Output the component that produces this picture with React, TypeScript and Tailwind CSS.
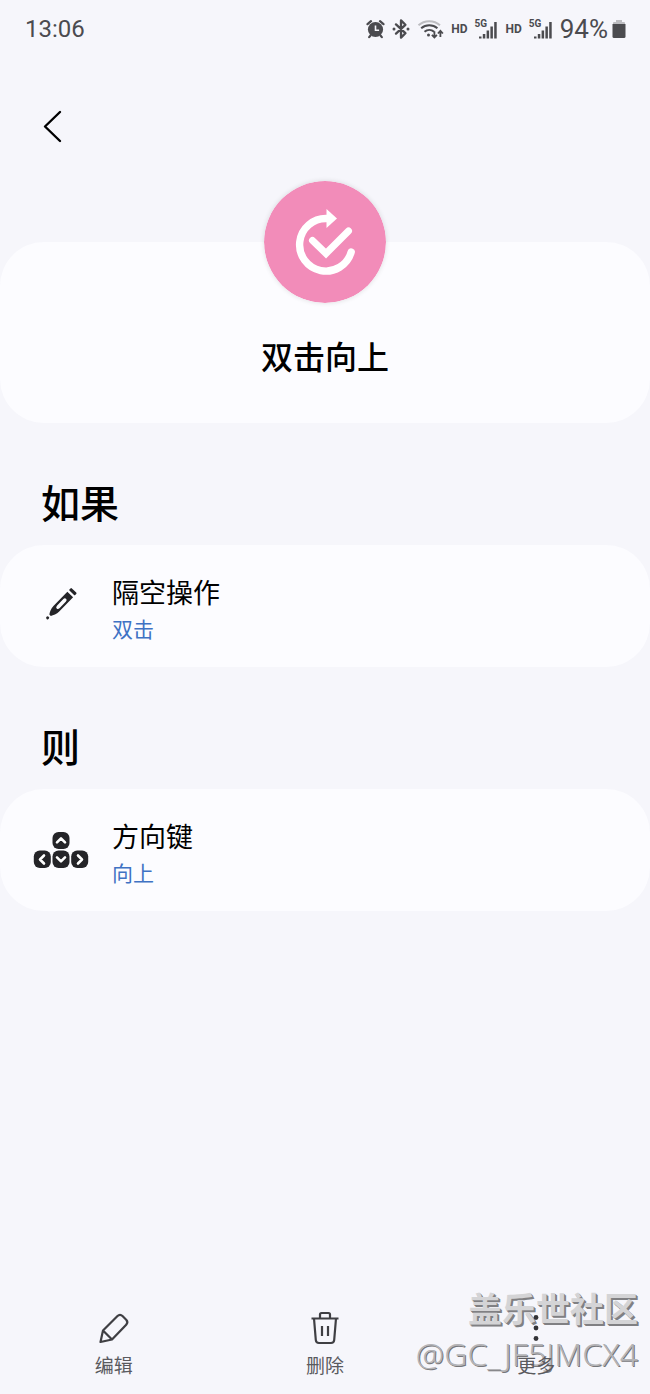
import type { ReactNode } from "react";

const INK = "#4b4b4f";

function AlarmIcon() {
  return (
    <svg width="19" height="20" viewBox="0 0 19 20" fill="none" aria-hidden="true">
      <circle cx="9.5" cy="10.5" r="7.6" fill={INK} />
      <path d="M1.5 5.2 5 2.2M17.5 5.2 14 2.2M4.5 16.5l-1.3 1.6M14.5 16.5l1.3 1.6" stroke={INK} strokeWidth="2.2" strokeLinecap="round" />
      <path d="M9.5 6.4v4.8h3.6" stroke="#f6f6fb" strokeWidth="1.6" />
    </svg>
  );
}

function BluetoothIcon() {
  return (
    <svg width="18" height="20" viewBox="0 0 18 20" fill="none" aria-hidden="true">
      <path d="M4 5.4 13.4 14.2 9 18.6V1.4L13.4 5.8 4 14.6" stroke={INK} strokeWidth="2.3" strokeLinejoin="round" strokeLinecap="round" />
      <circle cx="2" cy="10" r="1.5" fill={INK} />
      <circle cx="16" cy="10" r="1.5" fill={INK} />
    </svg>
  );
}

function WifiIcon() {
  return (
    <svg width="27" height="20" viewBox="0 0 27 20" fill="none" aria-hidden="true">
      <path d="M1.5 6.2c6-5.4 15.5-5.4 21.5 0" stroke="#bdbdc1" strokeWidth="2" />
      <path d="M4.2 9.3c4.6-4 11.6-4 16.2 0M7.5 12.7c2.8-2.4 6.8-2.4 9.6 0" stroke={INK} strokeWidth="2" />
      <circle cx="11.5" cy="16" r="1.5" fill={INK} />
      <path d="M17.4 12.2v6M14.9 15.8l2.5 2.7 2.5-2.7M23.4 18v-6M20.9 14.5l2.5-2.7 2.5 2.7" stroke={INK} strokeWidth="1.8" />
    </svg>
  );
}

function SignalIcon() {
  return (
    <span className="relative block h-5 w-6">
      <span className="absolute -top-px left-0 text-[10px] leading-[12px] font-bold">5G</span>
      <svg className="absolute inset-0" width="24" height="20" viewBox="0 0 24 20" fill={INK} aria-hidden="true">
        <path d="M5 17.5h2.5v2H5zM8.8 15h2.5v4.5H8.8zM12.6 11.5h2.5v8h-2.5zM16.4 7.5h2.5v12h-2.5zM20.2 3h2.5v16.5h-2.5z" />
      </svg>
    </span>
  );
}

function BatteryIcon() {
  return (
    <svg width="14" height="20" viewBox="0 0 14 20" aria-hidden="true">
      <path d="M4 1h6v2h2q1 0 1 1v2H1V4q0-1 1-1h2z" fill="#bdbdc1" />
      <path d="M.5 5h13v12.5q0 1.5-1.5 1.5H2Q.5 19 .5 17.5z" fill={INK} />
    </svg>
  );
}

function StatusBar() {
  return (
    <div className="flex h-[58px] items-center justify-between pr-6 pl-[25px] font-['Roboto','Liberation_Sans',sans-serif] text-[#4b4b4f]">
      <span className="text-[24px] leading-8">13:06</span>
      <div className="flex items-center gap-[7px]">
        <AlarmIcon />
        <BluetoothIcon />
        <WifiIcon />
        <span className="text-[12px] leading-5 font-bold">HD</span>
        <SignalIcon />
        <span className="text-[12px] leading-5 font-bold">HD</span>
        <SignalIcon />
        <div className="flex items-center gap-1">
          <span className="text-[26px] leading-8">94%</span>
          <BatteryIcon />
        </div>
      </div>
    </div>
  );
}

function RoutineBadge() {
  return (
    <svg className="-mt-[61px] rounded-full shadow-[0_0_5px_rgba(0,0,0,0.12)]" width="122" height="122" viewBox="0 0 122 122" fill="none" aria-hidden="true">
      <circle cx="61" cy="61" r="61" fill="#f28cb9" />
      <path d="M63 37.5A26.3 26.3 0 1 0 87.2 71" stroke="#fff" strokeWidth="7.4" strokeLinecap="round" />
      <path d="M62.5 28 73 37.5 62.5 47z" fill="#fff" />
      <path d="M48.5 59.5 62 72.5 84.5 50" stroke="#fff" strokeWidth="7" strokeLinecap="round" />
    </svg>
  );
}

function PenIcon() {
  return (
    <svg width="56" height="60" viewBox="0 0 56 60" fill="none" aria-hidden="true">
      <g transform="translate(27.5 30.5) rotate(44)" fill="#242428">
        <path d="M-3.2-16.2h6.4q.8 0 .8-.8v-1.5q0-1-1-1h-6q-1 0-1 1v1.5q0 .8.8.8z" />
        <path fillRule="evenodd" d="M-4-14h8V6c0 3.5-1.6 7-3 9h-2c-1.400-2-3-5.500-3-9zM-1.800-6V3q0 2.500 1.800 2.500t1.800-2.500V-6q0-2-1.800-2t-1.800 2z" />
        <circle cx="0" cy="18.5" r="1.5" />
      </g>
    </svg>
  );
}

function ArrowKeysIcon() {
  return (
    <svg width="56" height="60" viewBox="0 0 56 60" fill="none" aria-hidden="true">
      <g fill="#242428">
        <rect x="19.5" y="14" width="17" height="17" rx="6" />
        <rect x="0.8" y="32.5" width="17" height="17.5" rx="6" />
        <rect x="19.5" y="32.5" width="17" height="17.5" rx="6" />
        <rect x="38.2" y="32.5" width="17" height="17.5" rx="6" />
      </g>
      <path d="m24 24.3 4-4 4 4M11 37.5l-4 4 4 4M24 39.3l4 4 4-4M45 37.5l4 4-4 4" stroke="#fff" strokeWidth="2.6" strokeLinecap="round" strokeLinejoin="round" />
    </svg>
  );
}

function EditIcon() {
  return (
    <svg width="36" height="36" viewBox="0 0 36 36" fill="none" stroke="#3f3f43" strokeWidth="2.2" strokeLinejoin="round" aria-hidden="true">
      <path d="M4.5 32 7 20.5 21.5 6q2.5-2.500 5 0l3.700 3.700q2.300 2.500 0 5L16 29.500zM7 20.500 16 29.500" />
    </svg>
  );
}

function TrashIcon() {
  return (
    <svg width="36" height="36" viewBox="0 0 36 36" fill="none" stroke="#3f3f43" strokeWidth="2.2" strokeLinejoin="round" aria-hidden="true">
      <path d="M4.5 8.500h27M13 8.500v-4Q13 3 14.500 3h7Q23 3 23 4.500v4M7 8.500l1.800 21.500q.3 3 3.200 3h12q2.900 0 3.200-3L29 8.500M15 16V26M21 16V26" />
    </svg>
  );
}

function MoreIcon() {
  return (
    <svg width="36" height="36" viewBox="0 0 36 36" fill="#333337" aria-hidden="true">
      <circle cx="18" cy="7.5" r="2.4" />
      <circle cx="18" cy="18" r="2.4" />
      <circle cx="18" cy="28.5" r="2.4" />
    </svg>
  );
}

const sections = [
  { heading: "如果", title: "隔空操作", value: "双击", icon: <PenIcon /> },
  { heading: "则", title: "方向键", value: "向上", icon: <ArrowKeysIcon /> },
];

const actions: { label: string; icon: ReactNode }[] = [
  { label: "编辑", icon: <EditIcon /> },
  { label: "删除", icon: <TrashIcon /> },
  { label: "更多", icon: <MoreIcon /> },
];

export default function App() {
  return (
    <div className="relative flex min-h-screen flex-col overflow-hidden bg-[#f6f6fb] font-['Noto_Sans_CJK_SC',sans-serif] text-black">
      <StatusBar />

      <header className="h-[184px] pt-11 pl-7">
        <button type="button" aria-label="返回" className="flex size-12 items-center justify-center">
          <svg width="48" height="48" viewBox="0 0 48 48" fill="none" stroke="#000" strokeWidth="2.4" strokeLinecap="round" strokeLinejoin="round" aria-hidden="true">
            <path d="M32 10 17 24.5l15 14.5" />
          </svg>
        </button>
      </header>

      <main className="flex-1">
        <section className="flex flex-col items-center rounded-[44px] bg-[#fcfcff] pb-11">
          <RoutineBadge />
          <h1 className="mt-7 text-[32px] leading-[48px] font-medium">双击向上</h1>
        </section>

        {sections.map((s) => (
          <section key={s.heading}>
            <h2 className="mt-[50px] mb-4 pl-[41px] text-[39px] leading-[56px] font-medium">{s.heading}</h2>
            <button type="button" className="flex w-full items-start gap-[23px] rounded-[44px] bg-[#fcfcff] pt-[29px] pb-[26px] pl-[33px] text-left">
              {s.icon}
              <span className="flex flex-col gap-[5px]">
                <span className="text-[27px] leading-[36px]">{s.title}</span>
                <span className="text-[21px] leading-[26px] text-[#3f72c4]">{s.value}</span>
              </span>
            </button>
          </section>
        ))}
      </main>

      {/* community watermark, sits behind the toolbar labels */}
      <div className="pointer-events-none absolute right-3 bottom-5 text-right whitespace-nowrap">
        <p className="text-[34px] leading-[44px] font-bold text-[#d4d4d6] [text-shadow:1px_1px_0_#808083,2px_2px_0_#808083]">盖乐世社区</p>
        <p className="mt-1 font-['Noto_Sans',sans-serif] text-[32px] leading-[40px] font-light text-[#b4b4b7] [text-shadow:1px_1px_0_#77777a]">@GC_JF5JMCX4</p>
      </div>

      <nav className="relative grid grid-cols-3 px-2 pb-4">
        {actions.map((a) => (
          <button key={a.label} type="button" className="flex flex-col items-center gap-[6px] text-[19px] leading-[26px] text-[#5a5a5e]">
            {a.icon}
            {a.label}
          </button>
        ))}
      </nav>
    </div>
  );
}
